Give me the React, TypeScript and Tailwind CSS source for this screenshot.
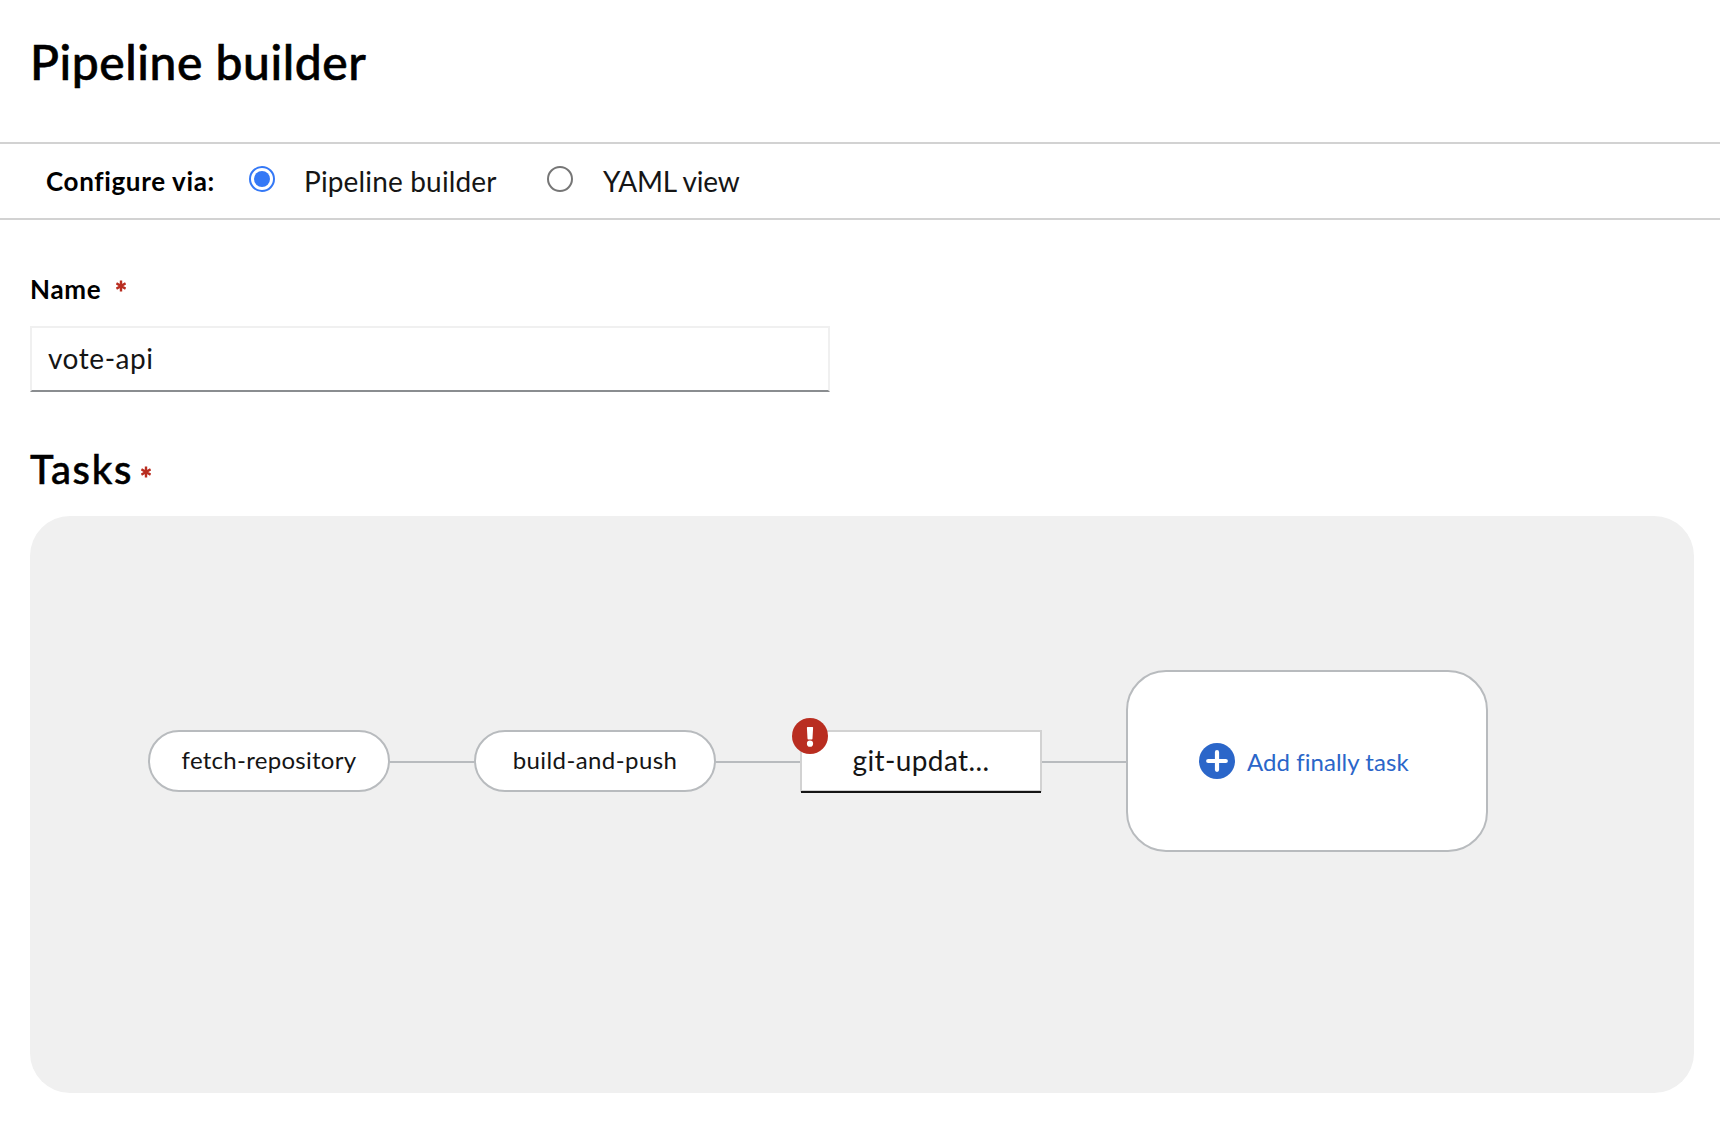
import React from "react";

function RequiredMark({ className = "" }: { className?: string }) {
  return (
    <svg viewBox="0 0 10 12" className={`h-3 w-2.5 ${className}`} stroke="#b92d20" strokeWidth="2.4" aria-label="required">
      <path d="M5 0.5V11.5M0.4 3.3L9.6 8.7M9.6 3.3L0.4 8.7" />
    </svg>
  );
}

function Connector() {
  return <div className="mt-px h-0.5 w-[84px] bg-[#b8bbbe]" />;
}

function TaskNode({ children }: { children: React.ReactNode }) {
  return (
    <div className="flex h-[62px] w-[242px] items-center justify-center rounded-full border-2 border-[#b8bbbe] bg-white pb-0.5 text-[24px] leading-none text-[#151515]">
      {children}
    </div>
  );
}

export default function App() {
  return (
    <div className="h-[1126px] w-full overflow-hidden bg-white font-['Lato',sans-serif] text-black [font-variant-ligatures:none]">
      <header className="h-[142px] pt-[38px] pl-[30px]">
        <h1 className="text-[48px] leading-none font-medium tracking-[0.55px] whitespace-nowrap [-webkit-text-stroke:0.6px_black]">Pipeline builder</h1>
      </header>

      <div className="flex h-[78px] items-start border-y-2 border-[#d2d2d2] pl-[46px] leading-none whitespace-nowrap">
        <div className="w-[203px] pt-6 text-[26px] leading-none font-bold tracking-[0.65px]">Configure via:</div>
        <span className="mt-[22px] flex size-[26px] items-center justify-center rounded-full border-2 border-[#3478f6]">
          <span className="size-4 rounded-full bg-[#3478f6]" />
        </span>
        <span className="ml-[29px] w-[243px] pt-[23px] text-[28px] leading-none tracking-[0.16px] text-[#151515]">Pipeline builder</span>
        <span className="mt-[22px] size-[26px] rounded-full border-2 border-[#767676]" />
        <span className="ml-[30px] pt-[23px] text-[28px] leading-none tracking-[-0.2px] text-[#151515]">YAML view</span>
      </div>

      <main className="pl-[30px]">
        <div className="flex h-[106px] items-start pt-14">
          <label className="w-[86px] text-[26px] leading-none font-bold tracking-[0.7px]">Name</label>
          <RequiredMark className="mt-1" />
        </div>
        <div className="h-[66px] w-[800px] border-2 border-[#f0f0f0] border-b-[#8a8d90] pt-4 pl-4 text-[28px] leading-none tracking-[0.55px] text-[#151515]">
          vote-api
        </div>
        <div className="flex h-[124px] items-start pt-[57px]">
          <h2 className="w-[111px] text-[40px] leading-none font-medium tracking-[1.7px] [-webkit-text-stroke:0.5px_black]">Tasks</h2>
          <RequiredMark className="mt-[17px]" />
        </div>

        <section className="flex h-[577px] w-[1664px] items-start rounded-[40px] bg-[#f0f0f0] pt-[154px] pl-[118px]">
          <div className="flex h-[182px] items-center whitespace-nowrap">
            <TaskNode><span className="tracking-[0.28px]">fetch-repository</span></TaskNode>
            <Connector />
            <TaskNode><span className="tracking-[0.4px]">build-and-push</span></TaskNode>
            <Connector />
            <div className="relative flex h-[62px] w-[242px] items-start justify-center border-2 border-[#d2d2d2] bg-white pt-3.5 text-[28px] leading-none text-[#151515]">
              <span className="tracking-[0.4px]">git-updat...</span>
              <div className="absolute -bottom-[3px] -left-px h-0.5 w-[240px] bg-[#151515]" />
              <svg viewBox="0 0 36 36" className="absolute -top-3.5 -left-2.5 size-9">
                <circle cx="18" cy="18" r="18" fill="#b92d20" />
                <path d="M15.5 9h5q.7 0 .6.8l-.6 10.8q0 .9-.8.9h-3.4q-.8 0-.8-.9l-.6-10.8q0-.8.6-.8z" fill="#fff" />
                <circle cx="18" cy="25.7" r="3.1" fill="#fff" />
              </svg>
            </div>
            <Connector />
            <div className="flex h-[182px] w-[362px] items-center rounded-[40px] border-2 border-[#b8bbbe] bg-white pl-[71px] text-[24px] leading-none text-[#2b66c9]">
              <svg viewBox="0 0 36 36" className="size-9">
                <circle cx="18" cy="18" r="18" fill="#2b66c9" />
                <path d="M18 9.2V26.8M9.2 18H26.8" stroke="#fff" strokeWidth="4.2" strokeLinecap="round" />
              </svg>
              <span className="ml-3 pt-0.5 tracking-[0.05px]">Add finally task</span>
            </div>
          </div>
        </section>
      </main>
    </div>
  );
}
